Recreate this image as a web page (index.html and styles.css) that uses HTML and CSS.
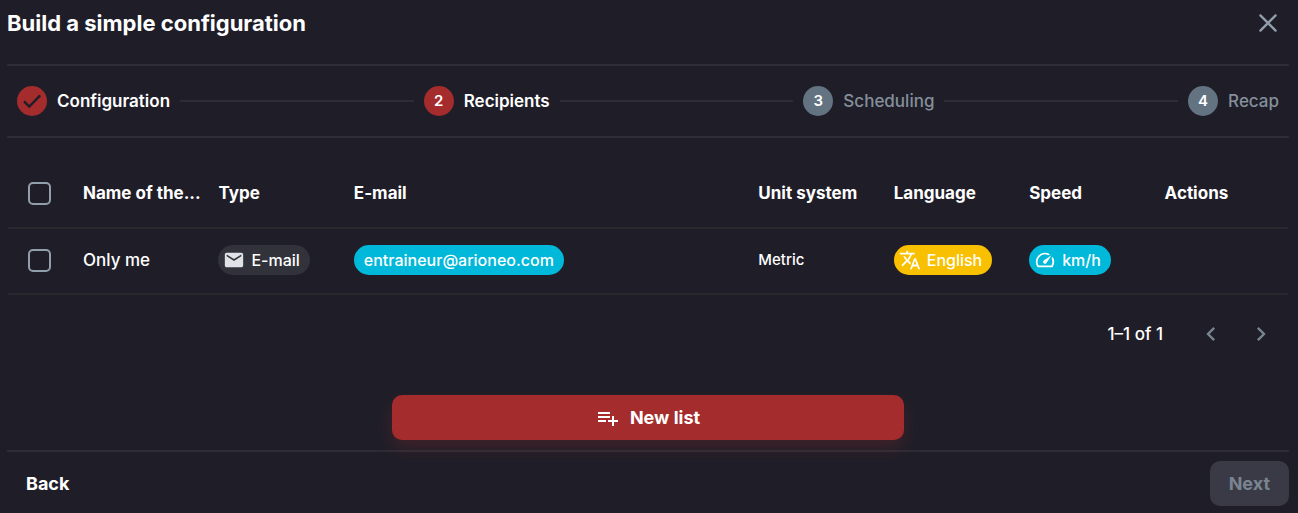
FILE: index.html
```html
<!DOCTYPE html>
<html lang="en">
<head>
    <meta charset="UTF-8">
    <meta name="viewport" content="width=device-width, initial-scale=1.0">
    <title>Build a simple configuration</title>
    <link rel="stylesheet" href="styles.css">
</head>
<body>

    <main class="dialog">
        <header class="dialog-header">
            <h1>Build a simple configuration</h1>
            <button class="icon-button" type="button" aria-label="Close">
                <svg width="24" height="24" viewBox="0 0 24 24" fill="none" stroke="currentColor" stroke-width="2.3" stroke-linecap="round"><path d="M4.400 4.400l15.200 15.200M19.600 4.400L4.400 19.600"/></svg>
            </button>
        </header>

        <ol class="stepper">
            <li class="step active">
                <span class="step-icon">
                    <svg width="24" height="24" viewBox="0 0 24 24" fill="none" stroke="currentColor" stroke-width="2.4"><path d="M4 12.400l5.300 5.200L20.200 6.400"/></svg>
                </span>
                <span class="step-label">Configuration</span>
            </li>
            <li class="connector" role="presentation"></li>
            <li class="step active" aria-current="step">
                <span class="step-icon">2</span>
                <span class="step-label">Recipients</span>
            </li>
            <li class="connector" role="presentation"></li>
            <li class="step">
                <span class="step-icon">3</span>
                <span class="step-label">Scheduling</span>
            </li>
            <li class="connector" role="presentation"></li>
            <li class="step">
                <span class="step-icon">4</span>
                <span class="step-label">Recap</span>
            </li>
        </ol>

        <section class="content">
            <table class="recipients">
                <colgroup>
                    <col class="col-check">
                    <col>
                    <col>
                    <col class="col-email">
                    <col>
                    <col>
                    <col>
                    <col>
                </colgroup>
                <thead>
                    <tr>
                        <th class="cell-check"><input type="checkbox" class="checkbox" aria-label="Select all rows"></th>
                        <th>Name of the...</th>
                        <th>Type</th>
                        <th>E-mail</th>
                        <th>Unit system</th>
                        <th>Language</th>
                        <th>Speed</th>
                        <th>Actions</th>
                    </tr>
                </thead>
                <tbody>
                    <tr>
                        <td class="cell-check"><input type="checkbox" class="checkbox" aria-label="Select Only me"></td>
                        <td>Only me</td>
                        <td>
                            <span class="chip chip-grey">
                                <svg width="22" height="22" viewBox="0 0 24 24" fill="currentColor"><path d="M20 4H4c-1.100 0-2 .9-2 2v12c0 1.100.9 2 2 2h16c1.100 0 2-.9 2-2V6c0-1.100-.9-2-2-2zm0 4l-8 5-8-5V6l8 5 8-5v2z"/></svg>
                                E-mail
                            </span>
                        </td>
                        <td><span class="chip chip-blue">entraineur@arioneo.com</span></td>
                        <td class="cell-small">Metric</td>
                        <td>
                            <span class="chip chip-yellow">
                                <svg width="22" height="22" viewBox="0 0 24 24" fill="currentColor"><path d="M12.870 15.070l-2.540-2.510.03-.03c1.740-1.940 2.980-4.170 3.710-6.530H17V4h-7V2H8v2H1v1.990h11.170C11.500 7.920 10.440 9.750 9 11.350 8.070 10.320 7.300 9.190 6.690 8h-2c.73 1.630 1.730 3.170 2.980 4.560l-5.090 5.020L4 19l5-5 3.110 3.110.76-2.040zM18.500 10h-2L12 22h2l1.120-3h4.750L21 22h2l-4.500-12zm-2.620 7l1.620-4.330L19.120 17h-3.240z"/></svg>
                                English
                            </span>
                        </td>
                        <td>
                            <span class="chip chip-blue">
                                <svg width="22" height="22" viewBox="0 0 24 24" fill="currentColor"><path d="M20.380 8.570l-1.230 1.850a8 8 0 0 1-.22 7.580H5.070A8 8 0 0 1 15.580 6.850l1.850-1.230A10 10 0 0 0 3.350 19a2 2 0 0 0 1.720 1h13.850a2 2 0 0 0 1.740-1 10 10 0 0 0-.27-10.440zm-9.790 6.840a2 2 0 0 0 2.830 0l5.660-8.490-8.490 5.660a2 2 0 0 0 0 2.830z"/></svg>
                                km/h
                            </span>
                        </td>
                        <td></td>
                    </tr>
                </tbody>
            </table>

            <nav class="pagination" aria-label="Pagination">
                <span class="page-count">1–1 of 1</span>
                <button class="page-button" type="button" aria-label="Previous page" disabled>
                    <svg width="28" height="28" viewBox="0 0 24 24" fill="currentColor"><path d="M15.410 16.590L10.830 12l4.580-4.590L14 6l-6 6 6 6 1.410-1.410z"/></svg>
                </button>
                <button class="page-button" type="button" aria-label="Next page" disabled>
                    <svg width="28" height="28" viewBox="0 0 24 24" fill="currentColor"><path d="M8.590 16.590L13.170 12 8.590 7.410 10 6l6 6-6 6-1.410-1.410z"/></svg>
                </button>
            </nav>

            <button class="button new-list" type="button">
                <svg width="24" height="24" viewBox="0 0 24 24" fill="currentColor"><path d="M14 10H2v2h12v-2zm0-4H2v2h12V6zm4 8v-4h-2v4h-4v2h4v4h2v-4h4v-2h-4zM2 16h8v-2H2v2z"/></svg>
                New list
            </button>
        </section>

        <footer class="dialog-footer">
            <button class="button back" type="button">Back</button>
            <button class="button next" type="button" disabled>Next</button>
        </footer>
    </main>

</body>
</html>
```

FILE: styles.css
```css
* {
    box-sizing: border-box;
}

body {
    margin: 0;
    background-color: #1f1e28;
    color: #ffffff;
    font-family: Inter, "Liberation Sans", sans-serif;
    font-size: 17px;
    line-height: 24px;
    font-weight: 500;
}

svg {
    display: block;
    flex: none;
}

button {
    padding: 0;
    border: none;
    background: none;
    color: inherit;
    font: inherit;
    cursor: pointer;
}

button:disabled {
    cursor: default;
}

.dialog {
    padding: 0 9px 0 7px;
}

.dialog-header {
    display: flex;
    align-items: center;
    justify-content: space-between;
    padding: 5px 9px 23px 0;
}

h1 {
    margin: 0;
    font-size: 22px;
    line-height: 36px;
    font-weight: 700;
}

.icon-button {
    color: #919eab;
}

.stepper {
    display: flex;
    align-items: center;
    gap: 10px;
    margin: 0;
    padding: 20px 10px;
    border-top: 2px solid #2d2d37;
    border-bottom: 2px solid #2d2d37;
    list-style: none;
}

.step {
    display: flex;
    align-items: center;
    gap: 10px;
    color: #848f9b;
}

.step-icon {
    display: flex;
    align-items: center;
    justify-content: center;
    width: 30px;
    height: 30px;
    border-radius: 50%;
    background-color: #637381;
    color: #ffffff;
    font-size: 15px;
    font-weight: 600;
}

.step.active {
    color: #ffffff;
    font-weight: 600;
}

.step.active .step-icon {
    background-color: #a52c2c;
}

.step-icon svg {
    color: #1f1e28;
}

.connector {
    flex: 1;
    height: 2px;
    background-color: #2d2d37;
}

.content {
    display: flex;
    flex-direction: column;
    padding: 21px 1px 10px;
}

.recipients {
    width: 100%;
    table-layout: fixed;
    border-collapse: separate;
    border-spacing: 0;
}

.col-check {
    width: 63px;
}

.col-email {
    width: 31.6%;
}

th, td {
    height: 66px;
    padding: 0 0 2px 12px;
    border-bottom: 2px solid #27272e;
    text-align: left;
    white-space: nowrap;
}

th {
    height: 70px;
    padding-bottom: 0;
    font-weight: 700;
}

.cell-check {
    padding-left: 0;
}

.cell-small {
    font-size: 15px;
}

.checkbox {
    display: block;
    width: 23px;
    height: 23px;
    margin: 0 auto;
    appearance: none;
    border: 2px solid #919eab;
    border-radius: 5px;
}

.checkbox:checked {
    background-color: #919eab;
}

.chip {
    display: inline-flex;
    align-items: center;
    gap: 6px;
    height: 30px;
    padding: 0 10px;
    border-radius: 15px;
    font-size: 16px;
    vertical-align: middle;
}

.chip svg {
    margin-left: -5px;
}

.chip-grey {
    background-color: #32323b;
}

.chip-grey svg {
    color: #dfe3e8;
}

.chip-blue {
    background-color: #00b8d9;
}

.chip-yellow {
    background-color: #f9c000;
}

.pagination {
    display: flex;
    align-items: center;
    justify-content: flex-end;
    gap: 22px;
    padding: 25px 13px;
}

.page-count {
    margin-right: 12px;
}

.page-button {
    color: #7a8490;
}

.button {
    display: flex;
    align-items: center;
    justify-content: center;
    gap: 10px;
    height: 45px;
    border-radius: 10px;
    font-size: 18px;
    font-weight: 700;
}

.new-list {
    align-self: center;
    width: 40%;
    margin-top: 22px;
    background-color: #a52c2c;
    box-shadow: 0 8px 16px rgba(165, 44, 44, 0.24);
}

.dialog-footer {
    display: flex;
    justify-content: space-between;
    padding: 9px 0 7px;
    border-top: 2px solid #2d2d37;
}

.back {
    padding: 0 19px;
}

.next {
    padding: 0 19px;
    background-color: #393a45;
    color: #7a8490;
}
```
